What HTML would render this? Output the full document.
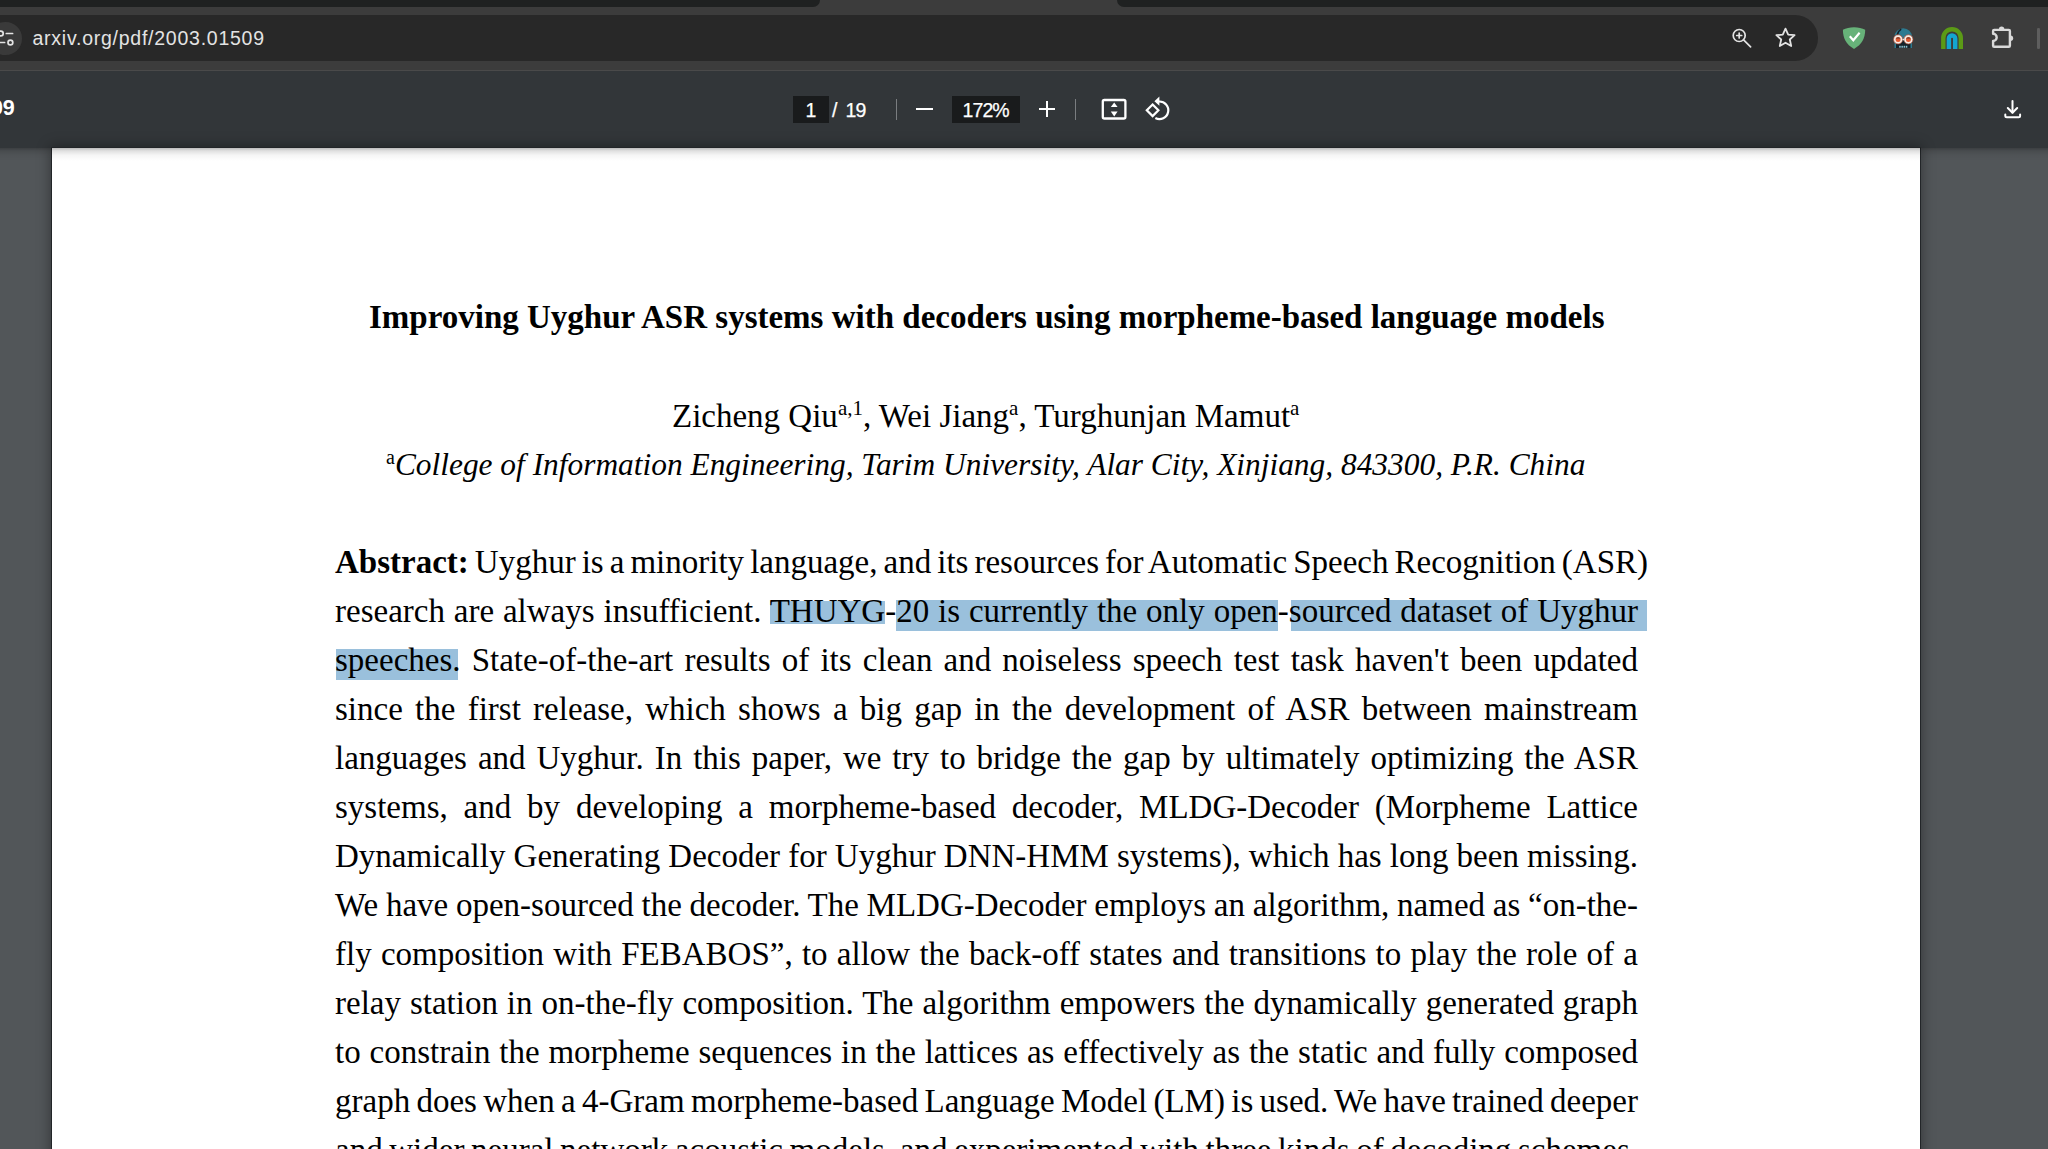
<!DOCTYPE html>
<html><head><meta charset="utf-8">
<style>
*{margin:0;padding:0;box-sizing:border-box}
html,body{width:2048px;height:1149px;overflow:hidden;background:#525659;font-family:"Liberation Sans",sans-serif}
#tabstrip{position:absolute;left:0;top:0;width:2048px;height:70px;background:#3c3c3c}
.darktab{position:absolute;top:0;height:6.7px;background:#1f2121}
#omni{position:absolute;left:-40px;top:15px;width:1858px;height:45.5px;border-radius:22.75px;background:#282828}
#tb2{position:absolute;left:0;top:61px;width:2048px;height:9px;background:#3c3c3c}
#sep{position:absolute;left:0;top:70px;width:2048px;height:1px;background:#4a4a4a}
#pdfbar{position:absolute;left:0;top:71px;width:2048px;height:77px;background:#323639}
#page{position:absolute;left:52px;top:147.5px;width:1868px;height:1100px;background:#fff;box-shadow:0 0 0 1px #222528, 0 0 12px 2px rgba(0,0,0,0.35)}
#shadowtop{position:absolute;left:0;top:147.5px;width:2048px;height:13px;background:linear-gradient(rgba(0,0,0,0.27),rgba(0,0,0,0.12) 22%,rgba(0,0,0,0.04) 55%,rgba(0,0,0,0))}
.ui{position:absolute;white-space:nowrap;font-family:"Liberation Sans",sans-serif;line-height:1}
.t{position:absolute;white-space:nowrap;color:#000;font-family:"Liberation Serif",serif}
.line{position:absolute;left:335px;white-space:nowrap;font-family:"Liberation Serif",serif;font-size:33px;line-height:33px;color:#000;text-align:justify;text-align-last:justify;word-spacing:-3px}
.sup{font-size:21px;vertical-align:12px;line-height:0}
.hl{position:absolute;background:#9ac0dc}
</style></head><body>
<div id="tabstrip"></div>
<div class="darktab" style="left:0;width:820px;border-bottom-right-radius:7px"></div>
<div class="darktab" style="left:1117px;width:931px;border-bottom-left-radius:7px"></div>
<div id="omni"></div>
<div style="position:absolute;left:-11px;top:21.8px;width:32.8px;height:32.8px;border-radius:50%;background:#3a3a3a"></div>
<svg style="position:absolute;left:0;top:26px" width="20" height="22" viewBox="0 0 20 22">
 <g fill="none" stroke="#e3e3e3" stroke-width="1.7" stroke-linecap="round">
  <circle cx="0.8" cy="7.5" r="2.4"/>
  <line x1="6.3" y1="7.5" x2="12.6" y2="7.5"/>
  <line x1="-1" y1="16.5" x2="4.6" y2="16.5"/>
  <circle cx="10.4" cy="16.5" r="2.4"/>
 </g>
</svg>
<div class="ui" style="left:32.5px;top:28.9px;font-size:19.5px;letter-spacing:0.75px;color:#e3e3e3">arxiv.org/pdf/2003.01509</div>
<svg style="position:absolute;left:1728px;top:24px" width="28" height="28" viewBox="0 0 28 28">
 <g fill="none" stroke="#e3e3e3" stroke-width="1.7" stroke-linecap="round">
  <circle cx="11.2" cy="11.5" r="6"/>
  <line x1="15.6" y1="15.9" x2="22.6" y2="22.8"/>
  <line x1="11.2" y1="9" x2="11.2" y2="14"/>
  <line x1="8.7" y1="11.5" x2="13.7" y2="11.5"/>
 </g>
</svg>
<svg style="position:absolute;left:1773px;top:25px" width="25" height="25" viewBox="0 0 25 25">
 <polygon fill="none" stroke="#e3e3e3" stroke-width="1.8" stroke-linejoin="round" points="12.5,3.6 15.2,9.6 21.6,10.2 16.8,14.5 18.2,21 12.5,17.7 6.8,21 8.2,14.5 3.4,10.2 9.8,9.6"/>
</svg>
<svg style="position:absolute;left:1840px;top:25px" width="28" height="26" viewBox="0 0 28 26">
 <path d="M14 2.2 C 9.5 2.2 6 3.2 2.9 4.8 C 2.9 13 6 19.5 14 23.9 C 22 19.5 25.2 13 25.2 4.8 C 22 3.2 18.5 2.2 14 2.2 Z" fill="#67b279"/>
 <path d="M9.8 11.3 L13.3 15.3 L19.6 7.8" fill="none" stroke="#fff" stroke-width="2.1" stroke-linecap="butt"/>
</svg>
<svg style="position:absolute;left:1890px;top:26px" width="26" height="24" viewBox="0 0 26 24">
 <path d="M4.5 22 L4.5 10.9 A8.75 8.75 0 0 1 22 10.9 L22 22 Z" fill="#2d7a90"/>
 <path d="M6 22 L6 15 L20.5 15 L20.5 22 Z" fill="#15222a"/>
 <path d="M7.2 9.5 Q 8 5 11.2 3.2" fill="none" stroke="#15222a" stroke-width="1.5"/>
 <circle cx="8.1" cy="13.4" r="4.6" fill="#f4eee8" stroke="#a9442b" stroke-width="0.7"/>
 <circle cx="18.4" cy="13.4" r="4.6" fill="#f4eee8" stroke="#a9442b" stroke-width="0.7"/>
 <circle cx="8.1" cy="13.6" r="2.5" fill="#e4582f"/>
 <circle cx="18.4" cy="13.6" r="2.5" fill="#e4582f"/>
 <path d="M5.7 12.8 A2.5 2.5 0 0 1 10.5 12.8 Z" fill="#3a2420" opacity="0.5"/>
 <path d="M16 12.8 A2.5 2.5 0 0 1 20.8 12.8 Z" fill="#3a2420" opacity="0.5"/>
 <rect x="12.6" y="12.8" width="1.3" height="1.3" fill="#f4eee8"/>
 <g fill="#8ec3d3"><rect x="9.2" y="19.8" width="1.5" height="1.9"/><rect x="11.4" y="19.8" width="1.5" height="1.9"/><rect x="13.6" y="19.8" width="1.5" height="1.9"/><rect x="15.8" y="19.8" width="1.5" height="1.9"/></g>
</svg>
<svg style="position:absolute;left:1938px;top:25px" width="28" height="26" viewBox="0 0 28 26">
 <path d="M5.3 24.1 L5.3 13 A8.75 8.75 0 0 1 22.8 13 L22.8 24.1" fill="none" stroke="#5b9a16" stroke-width="4.4"/>
 <path d="M10.9 24.1 L10.9 13.6 A3.15 3.15 0 0 1 17.2 13.6 L17.2 24.1" fill="none" stroke="#14a5cf" stroke-width="4.4"/>
</svg>
<svg style="position:absolute;left:1988px;top:23px" width="30" height="28" viewBox="0 0 30 28">
 <path d="M6.1 6.9 L20.8 6.9 Q21.9 6.9 21.9 8 L21.9 22.7 Q21.9 23.8 20.8 23.8 L6.1 23.8 Q5.1 23.8 5.1 22.7 L5.1 18 A3.6 3.6 0 0 0 5.1 10.8 L5.1 8 Q5.1 6.9 6.1 6.9 Z" fill="none" stroke="#d9d9d9" stroke-width="2.4" stroke-linejoin="round"/>
 <path d="M10.9 6.2 A2.7 2.7 0 0 1 16.3 6.2 Z" fill="#d9d9d9"/>
 <path d="M22.5 12.5 A2.7 2.7 0 0 1 22.5 17.9 Z" fill="#d9d9d9"/>
</svg>
<div style="position:absolute;left:2037px;top:27.5px;width:2.6px;height:21px;border-radius:1.3px;background:#5e5e5e"></div>
<div id="tb2"></div>
<div id="sep"></div>
<div id="pdfbar"></div>
<div class="ui" style="right:2033.2px;top:98.3px;font-size:21.5px;font-weight:bold;color:#fff">2003.01509</div>
<div style="position:absolute;left:793px;top:96px;width:35.5px;height:27px;background:#191b1c"></div>
<div class="ui" style="left:805.5px;top:100.8px;font-size:19.5px;color:#fff;-webkit-text-stroke:0.25px #fff">1</div>
<div class="ui" style="left:832px;top:100.8px;font-size:19.5px;color:#fff;letter-spacing:-0.9px;-webkit-text-stroke:0.25px #fff">/ &nbsp;19</div>
<div style="position:absolute;left:895.5px;top:99px;width:1.2px;height:20.6px;background:#7a7d80"></div>
<div style="position:absolute;left:916px;top:108.3px;width:16.5px;height:2.2px;background:#fff"></div>
<div style="position:absolute;left:952px;top:96px;width:68px;height:27px;background:#191b1c"></div>
<div class="ui" style="left:962.5px;top:100.8px;font-size:19.5px;color:#fff;letter-spacing:-0.9px;-webkit-text-stroke:0.25px #fff">172%</div>
<div style="position:absolute;left:1039px;top:108.3px;width:16.3px;height:2.2px;background:#fff"></div>
<div style="position:absolute;left:1046px;top:101.3px;width:2.2px;height:16.2px;background:#fff"></div>
<div style="position:absolute;left:1074.5px;top:99px;width:1.2px;height:20.6px;background:#7a7d80"></div>
<svg style="position:absolute;left:1098px;top:95px" width="32" height="28" viewBox="0 0 32 28">
 <rect x="4.8" y="5" width="22.6" height="18.5" rx="1.6" fill="none" stroke="#fff" stroke-width="2.3"/>
 <polygon points="16.2,7.4 19.6,12 12.8,12" fill="#fff"/>
 <polygon points="16.2,21.4 19.6,16.4 12.8,16.4" fill="#fff"/>
</svg>
<svg style="position:absolute;left:1138px;top:92px" width="36" height="32" viewBox="0 0 36 32">
 <polygon points="14.6,12.5 20.4,18.3 14.6,24.1 8.8,18.3" fill="none" stroke="#fff" stroke-width="2.2"/>
 <path d="M20.73 9.53 A 8.8 8.8 0 1 1 17.37 26.07" fill="none" stroke="#fff" stroke-width="2.2"/>
 <polygon points="16.4,9.3 21.4,4.4 21.4,13.8" fill="#fff"/>
</svg>
<svg style="position:absolute;left:2000px;top:96px" width="26" height="26" viewBox="0 0 26 26">
 <g fill="none" stroke="#fff" stroke-width="2" stroke-linecap="round" stroke-linejoin="round">
  <line x1="12.5" y1="5" x2="12.5" y2="16.5"/>
  <polyline points="7.8,12 12.5,16.8 17.2,12"/>
  <path d="M5.3 18.5 L5.3 19.8 Q5.3 21.3 6.8 21.3 L18.6 21.3 Q20.1 21.3 20.1 19.8 L20.1 18.5"/>
 </g>
</svg>
<div id="page"></div>
<div id="shadowtop"></div>
<div class="t" style="left:369px;top:301.4px;font-size:33px;line-height:33px;font-weight:bold">Improving Uyghur ASR systems with decoders using morpheme-based language models</div>
<div class="t" style="left:672px;top:399.8px;font-size:33px;line-height:33px">Zicheng Qiu<span class="sup">a,1</span>, Wei Jiang<span class="sup">a</span>, Turghunjan Mamut<span class="sup">a</span></div>
<div class="t" style="left:386px;top:449.3px;font-size:31.4px;line-height:31.4px;font-style:italic"><span class="sup" style="font-style:normal;font-size:20px;vertical-align:11px">a</span>College of Information Engineering, Tarim University, Alar City, Xinjiang, 843300, P.R. China</div>
<div class="hl" style="left:770px;top:600.7px;width:115px;height:23.3px"></div>
<div class="hl" style="left:896px;top:600px;width:382px;height:31px"></div>
<div class="hl" style="left:1290.6px;top:600px;width:356.4px;height:31px"></div>
<div class="hl" style="left:335.6px;top:648.7px;width:122.7px;height:31.8px"></div>
<div class="line" style="top:546.40px;width:1313px"><b>Abstract:</b> Uyghur is a minority language, and its resources for Automatic Speech Recognition (ASR)</div>
<div class="line" style="top:595.36px;width:1303px">research are always insufficient. THUYG-20 is currently the only open-sourced dataset of Uyghur</div>
<div class="line" style="top:644.32px;width:1303px">speeches. State-of-the-art results of its clean and noiseless speech test task haven't been updated</div>
<div class="line" style="top:693.28px;width:1303px">since the first release, which shows a big gap in the development of ASR between mainstream</div>
<div class="line" style="top:742.24px;width:1303px">languages and Uyghur. In this paper, we try to bridge the gap by ultimately optimizing the ASR</div>
<div class="line" style="top:791.20px;width:1303px">systems, and by developing a morpheme-based decoder, MLDG-Decoder (Morpheme Lattice</div>
<div class="line" style="top:840.16px;width:1303px">Dynamically Generating Decoder for Uyghur DNN-HMM systems), which has long been missing.</div>
<div class="line" style="top:889.12px;width:1303px">We have open-sourced the decoder. The MLDG-Decoder employs an algorithm, named as “on-the-</div>
<div class="line" style="top:938.08px;width:1303px">fly composition with FEBABOS”, to allow the back-off states and transitions to play the role of a</div>
<div class="line" style="top:987.04px;width:1303px">relay station in on-the-fly composition. The algorithm empowers the dynamically generated graph</div>
<div class="line" style="top:1036.00px;width:1303px">to constrain the morpheme sequences in the lattices as effectively as the static and fully composed</div>
<div class="line" style="top:1084.96px;width:1303px">graph does when a 4-Gram morpheme-based Language Model (LM) is used. We have trained deeper</div>
<div class="line" style="top:1133.92px;width:1303px">and wider neural network acoustic models, and experimented with three kinds of decoding schemes.</div>
</body></html>
